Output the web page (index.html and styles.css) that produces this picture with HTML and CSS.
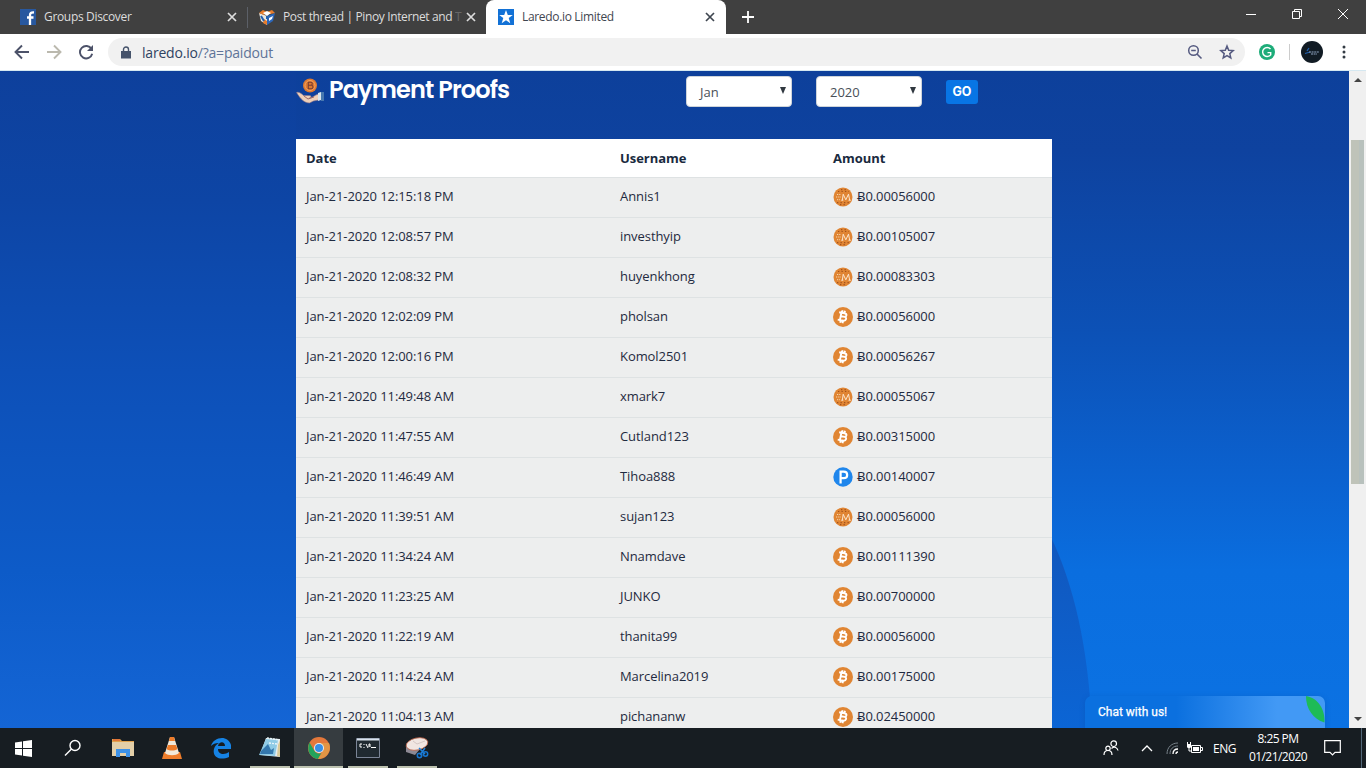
FILE: index.html
```html
<!DOCTYPE html>
<html lang="en">
<head>
<meta charset="utf-8">
<title>Laredo.io Limited</title>
<link rel="stylesheet" href="styles.css">
</head>
<body>
<svg class="defs" aria-hidden="true">
  <symbol id="x" viewBox="0 0 10 10"><path d="M1 1l8 8M9 1l-8 8" fill="none" stroke="currentColor" stroke-width="1.7"/></symbol>
  <symbol id="btc" viewBox="0 0 20 20">
    <circle cx="10" cy="10" r="10" fill="#e08533"/>
    <path d="M6.2 5.2l5.3 1.1c3 .7 2.2 3.3.2 3.5 2.400.5 1.800 4.300-1.500 3.900l-5.500-1.100M8.400 5.800L6.900 13M8 9.200l3.800.7M9.600 3.300l-.5 2.500M12 3.800l-.6 2.500M7.700 13.200l-.5 2.600M10 13.700l-.5 2.500" fill="none" stroke="#fff" stroke-width="1.900"/>
  </symbol>
  <symbol id="mil" viewBox="0 0 20 20">
    <circle cx="10" cy="10" r="9.500" fill="#e08533"/>
    <path d="M5 4.500h11M4 15.700h12M8 2.600h6M7 17.600h7" stroke="#a3521d" stroke-width="1.200" stroke-dasharray="1.300 2.200"/>
    <path d="M4 7.500h4M3 10h5M4 12.700h3" stroke="#f5d3ae" stroke-width="1" stroke-dasharray="1.200 1"/>
    <path d="M9.300 13.200L10.200 7.200l2.600 5.600 2.700-5.600 1.200 6M8.300 13.200h2M15.500 13.200h2.300" fill="none" stroke="#ffeedb" stroke-width=".9"/>
  </symbol>
  <symbol id="payeer" viewBox="0 0 20 20">
    <circle cx="10" cy="10" r="9.700" fill="#1f86ec"/>
    <path d="M7.600 16.500V4.600h3.200c4.500 0 4.500 6.600 0 6.600H8" fill="none" stroke="#fff" stroke-width="2.200"/>
  </symbol>
</svg>

<div class="screen">
  <header class="tabs">
    <div class="tab">
      <svg class="fav" viewBox="0 0 16 16"><path fill="#28589f" d="M0 0h16v16H0z"/><path d="M10 16V6.200C10 4 11 3.300 14 3.500M7 8.500h6.500" fill="none" stroke="#fff" stroke-width="2.300"/></svg>
      <span class="tab-name t1">Groups Discover</span>
      <svg class="close"><use href="#x"/></svg>
    </div>
    <div class="tab second">
      <svg class="fav" viewBox="0 0 16 16"><path fill="#e9e6df" d="M0 4l8 3v9L2 12z"/><path fill="#2c66b8" d="M8 7l8-3-2 8-6 4z"/><path fill="#e87d2c" d="M0 4l4-3 4 2-3 3zM8 3l5-2 3 3-5 1zM5 10l3 2v4l-4-2z"/><path fill="#fff" d="M4 4l4-2 4 2-4 3zM10 9l4-2-1 3-3 2z"/><path d="M2 7l3 5M8 7v3" stroke="#2461af" stroke-width="2"/></svg>
      <span class="tab-name t2">Post thread | Pinoy Internet and <span class="faded">T</span></span>
      <svg class="close"><use href="#x"/></svg>
    </div>
    <div class="tab active">
      <svg class="fav" viewBox="0 0 16 16"><path fill="#1271d6" d="M0 0h16v16H0z"/><path fill="#fff" d="M8 1l1.800 5h5L10.700 9l1.600 5.300L8 11.200l-4.300 3.100L5.300 9 1.200 6h5z"/></svg>
      <span class="tab-name t3">Laredo.io Limited</span>
      <svg class="close"><use href="#x"/></svg>
    </div>
    <svg class="plus" viewBox="0 0 12 12"><path d="M6 0v12M0 6h12" stroke="#fff" stroke-width="1.800"/></svg>
    <div class="window-buttons">
      <svg viewBox="0 0 12 12"><path d="M1 6.500h10" stroke="#fff"/></svg>
      <svg viewBox="0 0 12 12"><path d="M1.500 3.500h7v7h-7zM3.500 3.500v-2h7v7h-2" fill="none" stroke="#fff"/></svg>
      <svg viewBox="0 0 12 12"><path d="M1 1l10 10M11 1L1 11" stroke="#fff"/></svg>
    </div>
  </header>

  <div class="toolbar">
    <svg class="nav" viewBox="0 0 16 16"><path d="M15 8H2M8 1.500L1.500 8 8 14.500" fill="none" stroke="#4c5269" stroke-width="1.900"/></svg>
    <svg class="nav" viewBox="0 0 16 16"><path d="M1 8h13M8 1.500L14.500 8 8 14.500" fill="none" stroke="#bbb9ae" stroke-width="1.900"/></svg>
    <svg class="nav" viewBox="0 0 16 16"><path d="M13.500 5A6.200 6.200 0 1 0 14.200 9.700" fill="none" stroke="#4c5269" stroke-width="1.900"/><path d="M15 1v6H9z" fill="#4c5269"/></svg>
    <div class="address">
      <svg class="lock" viewBox="0 0 10 13"><path fill="#46536b" d="M0 5h10v7.500H0z"/><path d="M2.500 5V3.500a2.500 2.500 0 0 1 5 0V5" fill="none" stroke="#46536b" stroke-width="1.400"/></svg>
      <span class="url"><b>laredo.io</b>/?a=paidout</span>
      <svg class="tool" viewBox="0 0 16 16"><circle cx="6.500" cy="6.500" r="4.800" fill="none" stroke="#555a80" stroke-width="1.500"/><path d="M4.200 6.500h4.600M10 10l4.500 4.500" stroke="#555a80" stroke-width="1.600"/></svg>
      <svg class="tool" viewBox="0 0 16 16"><path d="M8 2l1.700 4.200 4.500.4-3.400 3 1 4.400L8 11.600 4.200 14l1-4.400-3.400-3 4.500-.4z" fill="none" stroke="#555a80" stroke-width="1.500"/></svg>
    </div>
    <svg class="grammarly" viewBox="0 0 16 16"><circle cx="8" cy="8" r="8" fill="#1dac79"/><path d="M11.500 5A4.500 4.500 0 1 0 12 10.300M8.500 8.600h3.200v2.500" fill="none" stroke="#fff" stroke-width="1.400"/></svg>
    <i class="divider"></i>
    <svg class="avatar" viewBox="0 0 22 22"><circle cx="11" cy="11" r="11" fill="#111b24"/><path d="M4 12.500l5-1.500M8 7l-2 3" stroke="#205fae" stroke-width="1.300"/><path d="M8 11h10M10 13h6" stroke="#8fa5c2" stroke-width="1.200" stroke-dasharray="2 .6"/></svg>
    <svg class="kebab" viewBox="0 0 4 14"><circle cx="2" cy="2" r="1.500"/><circle cx="2" cy="7" r="1.500"/><circle cx="2" cy="12" r="1.500"/></svg>
  </div>

  <div class="viewport">
    <main class="page">
      <svg class="backdrop" viewBox="0 0 1349 657"><defs><linearGradient id="shade" x1="0" y1="0" x2="0" y2="1"><stop offset="0" stop-color="#1157bd"/><stop offset="1" stop-color="#0b65d5"/></linearGradient></defs><path fill="url(#shade)" d="M1050 464c24 50 38 111 42 193h-60V464z"/></svg>
      <div class="content">
        <div class="heading">
          <svg class="hand" viewBox="0 0 28 26"><circle cx="14" cy="7.500" r="7" fill="#dd7931"/><circle cx="14" cy="7.500" r="5" fill="none" stroke="#f3a35e"/><path d="M12.300 4v7M12.300 4.200h2.500c2 0 2 3 0 3h-2.500 3c2.200 0 2.200 3.600 0 3.600h-3" fill="none" stroke="#793f32" stroke-width="1.100"/><path d="M.5 14.500c2-1 5 1 7 3h6c2 0 2 2 0 2.500 3 0 5-3 9-4v6l-5 1-4 2c-5 0-9-4-13-10.500z" fill="#eed0b8" stroke="#8a7186" stroke-width=".6"/><path d="M8 18l4 3 6-2" fill="none" stroke="#9d6b68"/><path d="M22 15l3-1v8l-3 1z" fill="#d8e5ec"/><path d="M25 14h3v9h-3z" fill="#4778af"/></svg>
          <h1>Payment Proofs</h1>
          <div class="select"><span>Jan</span><i></i></div>
          <div class="select"><span>2020</span><i></i></div>
          <button class="go">GO</button>
        </div>
        <div class="table">
          <div class="row head"><b>Date</b><b>Username</b><b>Amount</b></div>
          <div class="row"><span>Jan-21-2020 12:15:18 PM</span><span>Annis1</span><span class="amount"><svg><use href="#mil"/></svg>Ƀ0.00056000</span></div>
          <div class="row"><span>Jan-21-2020 12:08:57 PM</span><span>investhyip</span><span class="amount"><svg><use href="#mil"/></svg>Ƀ0.00105007</span></div>
          <div class="row"><span>Jan-21-2020 12:08:32 PM</span><span>huyenkhong</span><span class="amount"><svg><use href="#mil"/></svg>Ƀ0.00083303</span></div>
          <div class="row"><span>Jan-21-2020 12:02:09 PM</span><span>pholsan</span><span class="amount"><svg><use href="#btc"/></svg>Ƀ0.00056000</span></div>
          <div class="row"><span>Jan-21-2020 12:00:16 PM</span><span>Komol2501</span><span class="amount"><svg><use href="#btc"/></svg>Ƀ0.00056267</span></div>
          <div class="row"><span>Jan-21-2020 11:49:48 AM</span><span>xmark7</span><span class="amount"><svg><use href="#mil"/></svg>Ƀ0.00055067</span></div>
          <div class="row"><span>Jan-21-2020 11:47:55 AM</span><span>Cutland123</span><span class="amount"><svg><use href="#btc"/></svg>Ƀ0.00315000</span></div>
          <div class="row"><span>Jan-21-2020 11:46:49 AM</span><span>Tihoa888</span><span class="amount"><svg><use href="#payeer"/></svg>Ƀ0.00140007</span></div>
          <div class="row"><span>Jan-21-2020 11:39:51 AM</span><span>sujan123</span><span class="amount"><svg><use href="#mil"/></svg>Ƀ0.00056000</span></div>
          <div class="row"><span>Jan-21-2020 11:34:24 AM</span><span>Nnamdave</span><span class="amount"><svg><use href="#btc"/></svg>Ƀ0.00111390</span></div>
          <div class="row"><span>Jan-21-2020 11:23:25 AM</span><span>JUNKO</span><span class="amount"><svg><use href="#btc"/></svg>Ƀ0.00700000</span></div>
          <div class="row"><span>Jan-21-2020 11:22:19 AM</span><span>thanita99</span><span class="amount"><svg><use href="#btc"/></svg>Ƀ0.00056000</span></div>
          <div class="row"><span>Jan-21-2020 11:14:24 AM</span><span>Marcelina2019</span><span class="amount"><svg><use href="#btc"/></svg>Ƀ0.00175000</span></div>
          <div class="row"><span>Jan-21-2020 11:04:13 AM</span><span>pichananw</span><span class="amount"><svg><use href="#btc"/></svg>Ƀ0.02450000</span></div>
        </div>
      </div>
      <div class="chat"><span>Chat with us!</span><svg viewBox="0 0 19 27"><path d="M0 0c12 2 19 13 18.500 26.500C7 23 0 13 0 0z" fill="#1ebb57"/></svg></div>
    </main>
    <div class="scrollbar"><i class="up"></i><i class="thumb"></i><i class="down"></i></div>
  </div>

  <footer class="taskbar">
    <div class="app"><svg width="17" height="17" viewBox="0 0 17 17"><path fill="#fff" d="M0 2.500l7-1V8H0zM8 1.300L17 0v8H8zM0 9h7v6.500l-7-1zM8 9h9v8l-9-1.300z"/></svg></div>
    <div class="app"><svg width="18" height="18" viewBox="0 0 18 18"><circle cx="11" cy="6.500" r="5" fill="none" stroke="#fff" stroke-width="1.400"/><path d="M7.500 10L1 16.500" stroke="#fff" stroke-width="1.400"/></svg></div>
    <div class="app"><svg width="22" height="20" viewBox="0 0 22 20"><path fill="#dfa24e" d="M0 1h8l2 2h12v5H0z"/><path fill="#e17537" d="M1 1h7v2H1z"/><path fill="#e3cfa8" d="M0 4h22v14H0z"/><path fill="#3d91e7" d="M4 11h14v8h-4v-4H8v4H4z"/></svg></div>
    <div class="app"><svg width="22" height="22" viewBox="0 0 22 22"><path fill="#ee7d2b" d="M3 15h16l2 7H1z"/><path fill="#f1e8d9" d="M9 0h4l5 16c-3 3-11 3-14 0z"/><path fill="#ed7b29" d="M9 0h4l1 4H8zM7 8h8l1.500 4c-3 2-8 2-11 0z"/></svg></div>
    <div class="app"><svg width="20" height="22" viewBox="0 0 20 22"><path fill="#1683e5" d="M0 9C2 0 17-3 20 8v4H7c0 6 7 6 11 3v5C9 24 1 20 3 12c.6-3 3-5 5-6-4 0-6 1-8 3zm7 0h7c0-5-6-5-7 0z"/></svg></div>
    <div class="app open"><svg width="22" height="22" viewBox="0 0 22 22"><path fill="#e6edf0" d="M7 1l14 1v18l-20-2z"/><path fill="#8fcbe6" d="M7 2l12 1-3 16L0 18z"/><path fill="#3478ae" d="M2 14l7-7 3 6 3-2-1 6-13 0z"/><path d="M8 1l12 2M10 6l8 1" stroke="#e9f6fb" stroke-width="1.500" stroke-dasharray="2 1"/><path fill="#d8c999" d="M18 19l1-11 2-5v17z"/></svg></div>
    <div class="app open current"><svg width="22" height="22" viewBox="0 0 22 22"><circle cx="11" cy="11" r="11" fill="#e4783b"/><path fill="#23a35b" d="M1.500 5.500L6.500 14c2 3 5 3 7 2l-3.500 6C2 21-2 13 1.500 5.500z"/><path fill="#e29545" d="M11 6h10c3 9-3 16-11 16l5-8c2-3 0-6-4-8z"/><circle cx="11" cy="11" r="5" fill="#e9eef1"/><circle cx="11" cy="11" r="4" fill="#388fe6"/></svg></div>
    <div class="app open"><svg width="24" height="20" viewBox="0 0 24 20"><path fill="#202a31" stroke="#7b8597" d="M.5.5h23v19H.5z"/><path stroke="#d9e2ed" stroke-width="2" d="M1 1.500h22"/><path d="M6 6H4v3h2M8 6v1m0 2v1M10 6l2 4M13 9V6h1v3M15 9.500h5" fill="none" stroke="#fff"/></svg></div>
    <div class="app open"><svg width="24" height="22" viewBox="0 0 24 22"><path fill="#8d8994" d="M1 10v5l9 3 5-6z"/><ellipse cx="12" cy="7" rx="11" ry="6" fill="#f1e6e2" stroke="#bd654a" stroke-width=".8" transform="rotate(-12 12 7)"/><path d="M12 7l8-3M8 4l4 3" stroke="#d5c7c4"/><path d="M14 11l6 6M20 11l-5 7" stroke="#2180d7" stroke-width="1.500"/><circle cx="14.500" cy="18.500" r="2.200" fill="none" stroke="#1676d1" stroke-width="1.500"/><circle cx="20.500" cy="17" r="2.200" fill="none" stroke="#1676d1" stroke-width="1.500"/></svg></div>
    <div class="tray">
      <svg class="people" viewBox="0 0 16 16"><g fill="none" stroke="#fff" stroke-width="1.200"><circle cx="10.700" cy="3.700" r="2.800"/><circle cx="5" cy="8.300" r="2.200"/><path d="M1 15c0-6 8-6 8 0M8.500 8.500c3-3 6-.5 6.500 2"/></g></svg>
      <svg class="chevron" viewBox="0 0 12 8"><path d="M1 7l5-5 5 5" fill="none" stroke="#fff" stroke-width="1.300"/></svg>
      <svg class="wifi" viewBox="0 0 13 13"><g fill="none"><path d="M1 12C1 5 6 1 12 1M4 12c0-5 3-8 8-8" stroke="#78828a"/><path d="M7 12c0-3 2-5 5-5M10 12c0-1 .7-2 2-2" stroke="#fff" stroke-width="1.300"/></g></svg>
      <svg class="battery" viewBox="0 0 16 13"><path d="M4.500 3.500h9v7h-9zM14 5.500h1.500v3H14" fill="none" stroke="#fff"/><path fill="#fff" d="M6 5h6v4H6zM0 2h4v3c0 1.500-4 1.500-4 0z"/><path d="M.5 0v3M3.500 0v3M2 6v3h3" fill="none" stroke="#fff"/></svg>
      <span class="lang">ENG</span>
      <div class="clock"><span>8:25 PM</span><span>01/21/2020</span></div>
      <svg class="notice" viewBox="0 0 17 16"><path d="M.7.700h15.600v11.600h-5.300l-2.500 2.500L6 12.300H.7z" fill="none" stroke="#fff" stroke-width="1.200"/></svg>
      <i class="peek"></i>
    </div>
  </footer>
</div>
</body>
</html>
```
FILE: styles.css
```css
* { box-sizing: border-box; }
body { margin: 0; overflow: hidden; font-family: "Open Sans", "Noto Sans", sans-serif; }
svg { display: block; flex: none; }
.defs { display: none; }
.screen { width: 1366px; height: 768px; display: flex; flex-direction: column; overflow: hidden; }

.tabs { height: 34px; flex: none; display: flex; align-items: center; background: #404040; padding-left: 8px; }
.tab { width: 239px; height: 34px; flex: none; display: flex; align-items: center; padding: 0 10px 0 12px; color: #ddd; }
.second { padding-left: 11px; border-left: 1px solid transparent; border-image: linear-gradient(transparent 8px, #5c6068 8px, #5c6068 27px, transparent 27px) 1; }
.fav { width: 16px; height: 16px; }
.tab-name { flex: 1; margin-left: 8px; white-space: nowrap; font: 12px/18px "Open Sans", sans-serif; letter-spacing: -.33px; }
.t2 { letter-spacing: -.37px; }
.faded { opacity: .25; }
.close { width: 10px; height: 10px; }
.active { width: 240px; padding-right: 11px; background: #fff; color: #3f4650; border-radius: 8px 8px 0 0; }
.plus { width: 12px; height: 12px; margin-left: 16px; }
.window-buttons { margin-left: auto; display: flex; gap: 34px; padding: 0 17px 6px 0; }
.window-buttons svg { width: 12px; height: 12px; }

.toolbar { height: 37px; flex: none; display: flex; align-items: center; padding: 0 20px 0 14px; background: #fff; border-bottom: 1px solid #d5e8f1; }
.nav { width: 16px; height: 16px; margin-right: 16px; }
.address { width: 1137px; height: 28px; display: flex; align-items: center; margin-left: -2px; padding: 0 10px 0 13px; border-radius: 14px; background: #f1f1f1; }
.lock { width: 10px; height: 13px; }
.url { flex: 1; margin-left: 11px; font-size: 14px; letter-spacing: -.2px; color: #607498; }
.url b { font-weight: 400; color: #2f4361; }
.tool { width: 16px; height: 16px; margin-left: 16px; }
.grammarly { width: 16px; height: 16px; margin-left: 14px; }
.divider { width: 1px; height: 16px; margin: 0 11px 0 14px; background: #ccc; }
.avatar { width: 22px; height: 22px; }
.kebab { width: 4px; height: 14px; margin-left: 19px; fill: #333b44; }

.viewport { height: 657px; flex: none; display: flex; }
.page { width: 1349px; height: 657px; position: relative; overflow: hidden; background: linear-gradient(#0d409b 0, #0e429f 80px, #0c51b6 260px, #0b62d0 410px, #0a6edf 500px, #0b72e3 657px); }
.page::before { content: ""; position: absolute; left: 0; top: 0; width: 296px; height: 100%; background: linear-gradient(#0e409c 0, #0d45a5 130px, #0d50b8 300px, #0d5bc8 500px, #1465d5 657px); }
.backdrop { position: absolute; left: 0; top: 0; width: 1349px; height: 657px; }
.content { position: relative; width: 756px; margin-left: 296px; }
.heading { height: 68px; display: flex; align-items: flex-start; padding-top: 5px; }
.hand { width: 28px; height: 26px; margin-top: 2px; }
h1 { width: 357px; margin: -4px 0 0 5px; color: #fff; font: 600 24px/36px Poppins, Inter, sans-serif; letter-spacing: -.87px; white-space: nowrap; }
.select { width: 106px; height: 31px; flex: none; margin: 0 24px 0 0; padding: 0 5px 0 13px; display: flex; align-items: center; justify-content: space-between; border: 1px solid #ced4da; border-radius: 4px; background: #fff; font-size: 13px; color: #495057; }
.select i { border: 3.5px solid transparent; border-top: 7px solid #303840; border-bottom: 0; margin-bottom: 3px; }
.go { width: 32px; height: 24px; margin: 4px 0 0; padding: 0; border: 0; border-radius: 3px; background: #0875e5; color: #fff; font: 700 12.5px/24px Inter, sans-serif; }
.table { color: #1f2a40; font-size: 13px; }
.row { height: 40px; display: grid; grid-template-columns: 314px 213px 1fr; align-items: center; padding: 0 10px 3px; background: #edeeee; border-bottom: 1px solid #dee2e3; letter-spacing: -.07px; }
.head { height: 39px; padding-bottom: 0; background: #fff; color: #192a3e; letter-spacing: -.04px; }
.amount { display: flex; align-items: center; gap: 4px; }
.amount svg { width: 20px; height: 20px; margin: 2px 0 0; }
.chat { position: absolute; left: 1085px; bottom: 0; width: 240px; height: 32px; padding-left: 13px; display: flex; justify-content: space-between; align-items: flex-start; border-radius: 7px 7px 0 0; background: linear-gradient(90deg, #0b70df 0, #0b70df 38%, #4299f5 80%); box-shadow: 0 1px 5px #074fad66; color: #fff; font: 12px/32px Roboto, sans-serif; -webkit-text-stroke: .25px #fff; }
.chat svg { width: 19px; height: 27px; }
.scrollbar { width: 17px; display: flex; flex-direction: column; align-items: center; padding: 7px 0 7px; background: #f0f0f0; }
.up, .down { border: 4px solid transparent; border-top: 0; border-bottom: 4px solid #444; }
.thumb { width: 13px; height: 344px; margin-top: 58px; background: #bfc3b9; border-right: 5px solid #b8c1bd; }
.down { margin-top: auto; border-bottom: 0; border-top: 4px solid #444; }

.taskbar { height: 40px; flex: none; display: flex; background: #171d22; color: #fff; }
.app { width: 49px; height: 40px; flex: none; display: flex; align-items: center; justify-content: center; }
.app:nth-child(-n+2) { padding-right: 2px; }
.open { background: linear-gradient(#bdc2b0, #bdc2b0) center bottom / 40px 2px no-repeat; }
.current { background: linear-gradient(transparent 38px, #bdc2b0 38px), #363c40; }
.tray { margin-left: auto; width: 264px; display: flex; align-items: center; }
.people { width: 16px; height: 16px; margin-left: 1px; }
.chevron { width: 12px; height: 8px; margin-left: 22px; }
.wifi { width: 13px; height: 13px; margin: 1px 0 0 13px; }
.battery { width: 16px; height: 13px; margin-left: 8px; }
.lang { width: 24px; margin-left: 10px; font-size: 12px; letter-spacing: -.5px; }
.clock { width: 70px; margin-left: 6px; display: flex; flex-direction: column; text-align: center; font: 12px/18px "Open Sans", sans-serif; letter-spacing: -.55px; }
.notice { width: 17px; height: 16px; margin-left: 11px; }
.peek { width: 1px; height: 40px; margin-left: auto; margin-right: 4px; background: #526778; }
```
